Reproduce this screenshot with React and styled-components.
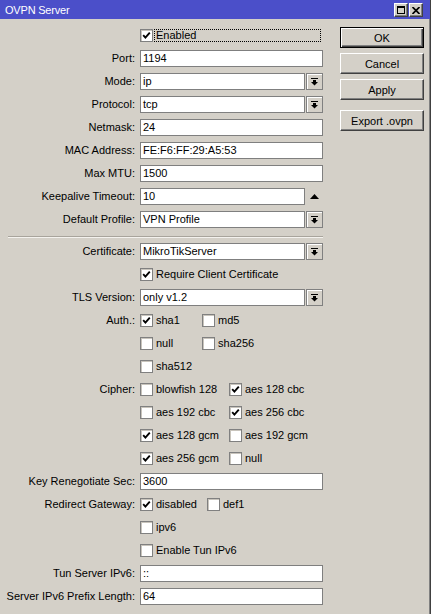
import React from "react";
import styled, { createGlobalStyle } from "styled-components";

const GlobalStyle = createGlobalStyle`
  body {
    margin: 0;
    background: #d4d0c8;
    font-family: "Liberation Sans", Arial, sans-serif;
    font-size: 11px;
    color: #000;
  }
  * {
    box-sizing: border-box;
  }
`;

const Window = styled.div`
  width: 431px;
  height: 614px;
  background: #d4d0c8;
  border-right: 1px solid #404040;
  box-shadow: inset -1px 0 #808080;
  display: flex;
  flex-direction: column;
  overflow: hidden;
`;

const TitleBar = styled.div`
  height: 19px;
  background: #4b4fc9;
  color: #fff;
  display: flex;
  align-items: center;
  justify-content: space-between;
  padding: 0 7px 0 5px;
  .title {
    font-size: 11px;
    letter-spacing: -0.2px;
  }
`;

const TitleButtons = styled.div`
  display: flex;
  gap: 1px;
  margin-top: 1px;
`;

const TitleButton = styled.div`
  width: 14px;
  height: 14px;
  background: #d4d0c8;
  border: 1px solid;
  border-color: #fff #404040 #404040 #fff;
  box-shadow: inset -1px -1px #808080;
  display: flex;
  align-items: center;
  justify-content: center;
`;

const Body = styled.div`
  flex: 1;
  display: flex;
`;

const Form = styled.div`
  width: 323px;
  padding-top: 5px;
  display: flex;
  flex-direction: column;
`;

const Row = styled.div`
  display: grid;
  grid-template-columns: 135px 183px;
  column-gap: 5px;
  align-items: start;
  min-height: 23px;
`;

const Label = styled.div`
  text-align: right;
  line-height: 23px;
  white-space: nowrap;
`;

const Field = styled.div`
  height: 23px;
  display: flex;
  align-items: center;
  gap: 1px;
`;

const TextBox = styled.div`
  flex: 1;
  height: 17px;
  background: #fff;
  border: 1px solid #7f7f7f;
  padding: 0 2px;
  line-height: 15px;
  white-space: nowrap;
  overflow: hidden;
`;

const DropButton = styled.div`
  width: 17px;
  height: 17px;
  background: #d4d0c8;
  border: 1px solid #808080;
  box-shadow: inset 1px 1px #fff;
  display: flex;
  align-items: center;
  justify-content: center;
`;

const Spinner = styled.div`
  width: 17px;
  height: 17px;
  display: flex;
  align-items: center;
  justify-content: center;
`;

const Separator = styled.div`
  height: 9px;
  margin-left: 8px;
  padding-top: 5px;
  &::after {
    content: "";
    display: block;
    height: 1px;
    background: #a8a49c;
    border-bottom: 1px solid #f4f2ee;
    box-sizing: content-box;
  }
`;

const CheckGrid = styled.div`
  display: grid;
  grid-template-columns: repeat(2, max-content);
  grid-auto-rows: 23px;
  column-gap: 10px;
`;

const CheckItem = styled.div`
  display: flex;
  align-items: center;
  gap: 3px;
  white-space: nowrap;
  flex: ${(p) => (p.wide ? 1 : "none")};
  .text {
    line-height: 13px;
  }
`;

const FocusText = styled.span`
  flex: 1;
  margin-right: 2px;
  margin-left: -2px;
  height: 13px;
  line-height: 11px;
  padding: 0 1px;
  border: 1px dotted #000;
`;

const Box = styled.div`
  width: 13px;
  height: 13px;
  flex: none;
  background: #fff;
  border: 1px solid #808080;
  box-shadow: inset 1px 1px #c8c4bc;
  display: flex;
  align-items: center;
  justify-content: center;
`;

const Buttons = styled.div`
  margin-left: 17px;
  padding-top: 8px;
  display: flex;
  flex-direction: column;
  gap: 5px;
  width: 84px;
`;

const Button = styled.div`
  height: 21px;
  display: flex;
  align-items: center;
  justify-content: center;
  background: #d4d0c8;
  border: 1px solid;
  border-color: ${(p) => (p.primary ? "#000" : "#fff #404040 #404040 #fff")};
  box-shadow: ${(p) =>
    p.primary
      ? "inset 1px 1px #fff, inset -1px -1px #404040, inset -2px -2px #808080"
      : "inset -1px -1px #808080"};
  margin-top: ${(p) => (p.gapBefore ? "5px" : "0")};
`;

function CheckMark() {
  return (
    <svg width="9" height="9" viewBox="0 0 9 9">
      <path d="M1.2 4.2 L3.4 6.6 L7.8 1.6" fill="none" stroke="#000" strokeWidth="1.9" />
    </svg>
  );
}

function Check({ checked, children }) {
  return (
    <CheckItem>
      <Box>{checked && <CheckMark />}</Box>
      <span className="text">{children}</span>
    </CheckItem>
  );
}

function DropIcon() {
  return (
    <svg width="7" height="8" viewBox="0 0 7 8">
      <rect x="0" y="0" width="7" height="1" fill="#000" />
      <rect x="2" y="2" width="3" height="2" fill="#000" />
      <path d="M0 4 H7 L3.5 7.5 Z" fill="#000" />
    </svg>
  );
}

function UpIcon() {
  return (
    <svg width="9" height="5" viewBox="0 0 9 5">
      <path d="M0 5 H9 L4.5 0 Z" fill="#000" />
    </svg>
  );
}

function TextRow({ label, value, kind }) {
  return (
    <Row>
      <Label>{label}</Label>
      <Field>
        <TextBox>{value}</TextBox>
        {kind === "drop" && (
          <DropButton>
            <DropIcon />
          </DropButton>
        )}
        {kind === "spin" && (
          <Spinner>
            <UpIcon />
          </Spinner>
        )}
      </Field>
    </Row>
  );
}

function CheckRow({ label, items }) {
  return (
    <Row>
      <Label>{label}</Label>
      <CheckGrid>
        {items.map((it, i) => (
          <Check key={i} checked={it.on}>
            {it.text}
          </Check>
        ))}
      </CheckGrid>
    </Row>
  );
}

export default function App() {
  return (
    <>
      <GlobalStyle />
      <Window>
        <TitleBar>
          <span className="title">OVPN Server</span>
          <TitleButtons>
            <TitleButton>
              <svg width="8" height="8" viewBox="0 0 8 8">
                <rect x="0.5" y="0.5" width="7" height="7" fill="none" stroke="#000" />
                <rect x="0" y="0" width="8" height="2" fill="#000" />
              </svg>
            </TitleButton>
            <TitleButton>
              <svg width="8" height="7" viewBox="0 0 8 7">
                <path d="M0.5 0 L7.5 7 M7.5 0 L0.5 7" stroke="#000" strokeWidth="1.7" />
              </svg>
            </TitleButton>
          </TitleButtons>
        </TitleBar>
        <Body>
          <Form>
            <Row>
              <span />
              <Field>
                <CheckItem wide>
                  <Box>
                    <CheckMark />
                  </Box>
                  <FocusText>Enabled</FocusText>
                </CheckItem>
              </Field>
            </Row>
            <TextRow label="Port:" value="1194" />
            <TextRow label="Mode:" value="ip" kind="drop" />
            <TextRow label="Protocol:" value="tcp" kind="drop" />
            <TextRow label="Netmask:" value="24" />
            <TextRow label="MAC Address:" value="FE:F6:FF:29:A5:53" />
            <TextRow label="Max MTU:" value="1500" />
            <TextRow label="Keepalive Timeout:" value="10" kind="spin" />
            <TextRow label="Default Profile:" value="VPN Profile" kind="drop" />
            <Separator />
            <TextRow label="Certificate:" value="MikroTikServer" kind="drop" />
            <CheckRow label="" items={[{ text: "Require Client Certificate", on: true }]} />
            <TextRow label="TLS Version:" value="only v1.2" kind="drop" />
            <CheckRow
              label="Auth.:"
              items={[
                { text: "sha1", on: true },
                { text: "md5" },
                { text: "null" },
                { text: "sha256" },
                { text: "sha512" },
              ]}
            />
            <CheckRow
              label="Cipher:"
              items={[
                { text: "blowfish 128" },
                { text: "aes 128 cbc", on: true },
                { text: "aes 192 cbc" },
                { text: "aes 256 cbc", on: true },
                { text: "aes 128 gcm", on: true },
                { text: "aes 192 gcm" },
                { text: "aes 256 gcm", on: true },
                { text: "null" },
              ]}
            />
            <TextRow label="Key Renegotiate Sec:" value="3600" />
            <CheckRow
              label="Redirect Gateway:"
              items={[{ text: "disabled", on: true }, { text: "def1" }, { text: "ipv6" }]}
            />
            <CheckRow label="" items={[{ text: "Enable Tun IPv6" }]} />
            <TextRow label="Tun Server IPv6:" value="::" />
            <TextRow label="Server IPv6 Prefix Length:" value="64" />
          </Form>
          <Buttons>
            <Button primary>OK</Button>
            <Button>Cancel</Button>
            <Button>Apply</Button>
            <Button gapBefore>Export .ovpn</Button>
          </Buttons>
        </Body>
      </Window>
    </>
  );
}
